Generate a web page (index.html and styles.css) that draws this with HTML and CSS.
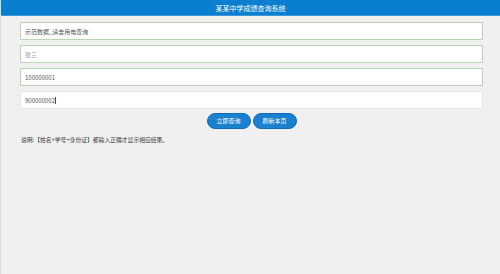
FILE: index.html
```html
<!DOCTYPE html>
<html lang="zh-CN">
<head>
<meta charset="utf-8">
<title>某某中学成绩查询系统</title>
<link rel="stylesheet" href="styles.css">
</head>
<body>
<div class="page">
  <header class="topbar">某某中学成绩查询系统</header>
  <main class="form">
    <div class="field ok"><span class="val">示范数据_请舍用电查询</span></div>
    <div class="field ok"><span class="ph">张三</span></div>
    <div class="field ok"><span class="val">100000001</span></div>
    <div class="field focus"><span class="val">900000002</span><span class="caret"></span></div>
    <div class="actions">
      <button class="btn">立即查询</button>
      <button class="btn">刷新本页</button>
    </div>
    <p class="note">说明:【姓名+学号+身份证】都输入正确才显示相应结果。</p>
  </main>
</div>
</body>
</html>
```
FILE: styles.css
```css
html, body {
  margin: 0;
  padding: 0;
  background: #f0f0f0;
}
.page {
  width: 500px;
  height: 274px;
  box-sizing: border-box;
  border-left: 1px solid #dcdcdc;
  font-family: "Noto Sans CJK SC", "Noto Sans", sans-serif;
  overflow: hidden;
}
.topbar {
  height: 16px;
  background: #0a7fd0;
  color: #ffffff;
  font-size: 7px;
  line-height: 16px;
  text-align: center;
  border-bottom: 1px solid #3a97d8;
  box-sizing: border-box;
}
.form {
  display: flex;
  flex-direction: column;
  gap: 5px;
  padding: 6px 17px 0 19px;
}
.field {
  height: 18px;
  box-sizing: border-box;
  background: #ffffff;
  display: flex;
  align-items: center;
  padding-left: 4px;
  font-size: 6px;
  color: #555555;
}
.field.ok {
  border: 1px solid #b6d6b4;
}
.field.focus {
  border: 1px solid #e6e6e6;
}
.ph {
  color: #999999;
}
.caret {
  display: inline-block;
  width: 1px;
  height: 7px;
  background: #555555;
}
.actions {
  display: flex;
  justify-content: center;
  gap: 2px;
  margin-top: -1px;
}
.btn {
  width: 44px;
  height: 16px;
  border-radius: 8px;
  background: #1a80d0;
  border: 1px solid #0f6cb6;
  color: #ffffff;
  font-family: "Noto Sans CJK SC", "Noto Sans", sans-serif;
  font-size: 6px;
  padding: 0;
  line-height: 14px;
}
.note {
  margin: 1px 0 0 1px;
  font-size: 5.8px;
  color: #444444;
  line-height: 10px;
}
```
